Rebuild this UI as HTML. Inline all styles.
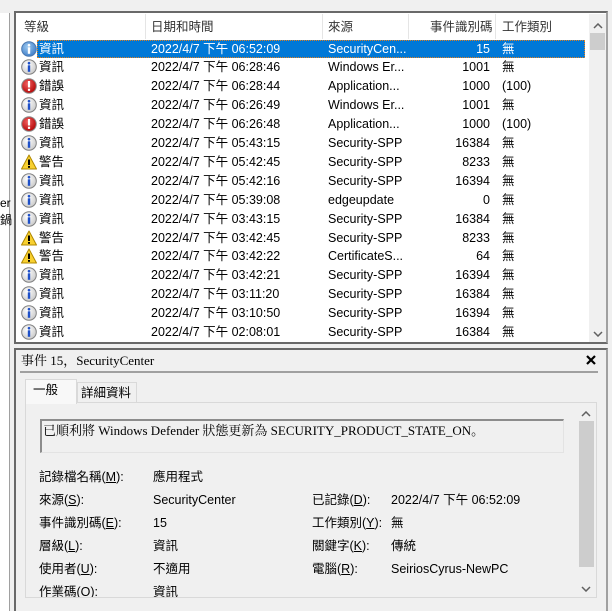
<!DOCTYPE html><html><head><meta charset="utf-8"><style>
*{margin:0;padding:0;box-sizing:border-box}
body{width:612px;height:611px;overflow:hidden;background:#f0f0f0;position:relative;font-family:"Liberation Sans","Noto Sans CJK TC",sans-serif;font-size:12.5px;line-height:16px;color:#000}
.a{position:absolute;white-space:nowrap;line-height:16px}
.row{position:absolute;left:17px;width:572px;height:19px}
.row span{position:absolute;top:1px;line-height:16px}
.ic{position:absolute;left:4px;top:1px;width:16px;height:16px}
.lbl{position:absolute;white-space:nowrap;color:#000;line-height:16px}
.mono{font-family:"Liberation Serif","Noto Serif CJK SC",serif}
.chev{position:absolute;width:10px;height:6px}
</style></head><body>
<div class="a" style="left:0;top:13px;width:10px;height:598px;background:#fff;border-right:1px solid #a0a0a0"></div>
<div class="a" style="left:0;top:195px;font-size:12px">er</div>
<div class="a" style="left:0;top:212px;font-size:12px">鍋</div>
<div class="a" style="left:14px;top:11px;width:594px;height:333px;border:2px solid #696969;border-right-color:#a0a0a0;background:#fff"></div>
<div class="a" style="left:24px;top:19px;color:#333">等級</div>
<div class="a" style="left:145px;top:14px;width:1px;height:25px;background:#e5e5e5"></div>
<div class="a" style="left:151px;top:19px;color:#333">日期和時間</div>
<div class="a" style="left:322px;top:14px;width:1px;height:25px;background:#e5e5e5"></div>
<div class="a" style="left:328px;top:19px;color:#333">來源</div>
<div class="a" style="left:408px;top:14px;width:1px;height:25px;background:#e5e5e5"></div>
<div class="a" style="left:430px;top:19px;color:#333">事件識別碼</div>
<div class="a" style="left:495px;top:14px;width:1px;height:25px;background:#e5e5e5"></div>
<div class="a" style="left:502px;top:19px;color:#333">工作類別</div>
<div class="a" style="left:589px;top:14px;width:17px;height:328px;background:#f0f0f0"></div>
<svg class="chev" style="left:593px;top:23px" viewBox="0 0 10 6"><polyline points="1,5 5,1 9,5" fill="none" stroke="#606060" stroke-width="1.5"/></svg>
<div class="a" style="left:590px;top:33px;width:15px;height:17px;background:#cdcdcd"></div>
<svg class="chev" style="left:593px;top:331px" viewBox="0 0 10 6"><polyline points="1,1 5,5 9,1" fill="none" stroke="#606060" stroke-width="1.5"/></svg>
<svg width="0" height="0" style="position:absolute"><defs>
<radialGradient id="gi" cx="40%" cy="35%" r="70%"><stop offset="0" stop-color="#fff"/><stop offset="1" stop-color="#c8c8c8"/></radialGradient>
<radialGradient id="gr" cx="40%" cy="35%" r="70%"><stop offset="0" stop-color="#f06060"/><stop offset="1" stop-color="#b00000"/></radialGradient>
<radialGradient id="gb" cx="40%" cy="35%" r="70%"><stop offset="0" stop-color="#9cc8f0"/><stop offset="1" stop-color="#3b7cc8"/></radialGradient>
<symbol id="info" viewBox="0 0 16 16"><circle cx="8" cy="8" r="7.3" fill="url(#gi)" stroke="#808080"/><circle cx="8" cy="4.2" r="1.3" fill="#1e50c8"/><rect x="6.8" y="6.3" width="2.4" height="6.5" fill="#1e50c8"/></symbol>
<symbol id="infos" viewBox="0 0 16 16"><circle cx="8" cy="8" r="7.3" fill="url(#gb)" stroke="#4a78b0"/><circle cx="8" cy="4.2" r="1.3" fill="#fff"/><rect x="6.8" y="6.3" width="2.4" height="6.5" fill="#fff"/></symbol>
<symbol id="err" viewBox="0 0 16 16"><circle cx="8" cy="8" r="7.3" fill="url(#gr)" stroke="#8a8a8a"/><rect x="6.9" y="3" width="2.2" height="6.5" fill="#fff"/><rect x="6.9" y="10.7" width="2.2" height="2.2" fill="#fff"/></symbol>
<symbol id="warn" viewBox="0 0 16 16"><path d="M8 1 L15.5 15 H0.5 Z" fill="#f8d030" stroke="#b08800" stroke-linejoin="round"/><rect x="7" y="5.5" width="2" height="5.5" fill="#000"/><rect x="7" y="12" width="2" height="1.8" fill="#000"/></symbol>
</defs></svg>
<div id="rows"></div>
<script>
var d=[["infos","資訊","06:52:09","SecurityCen...","15","無"],["info","資訊","06:28:46","Windows Er...","1001","無"],["err","錯誤","06:28:44","Application...","1000","(100)"],["info","資訊","06:26:49","Windows Er...","1001","無"],["err","錯誤","06:26:48","Application...","1000","(100)"],["info","資訊","05:43:15","Security-SPP","16384","無"],["warn","警告","05:42:45","Security-SPP","8233","無"],["info","資訊","05:42:16","Security-SPP","16394","無"],["info","資訊","05:39:08","edgeupdate","0","無"],["info","資訊","03:43:15","Security-SPP","16384","無"],["warn","警告","03:42:45","Security-SPP","8233","無"],["warn","警告","03:42:22","CertificateS...","64","無"],["info","資訊","03:42:21","Security-SPP","16394","無"],["info","資訊","03:11:20","Security-SPP","16384","無"],["info","資訊","03:10:50","Security-SPP","16394","無"],["info","資訊","02:08:01","Security-SPP","16384","無"]];
var h="";d.forEach(function(r,i){var t=39.5+i*18.9;var s=i==0;var c=s?'color:#fff':'';
h+='<div class="row" style="top:'+t+'px;height:'+(i==15?'18':'19')+'px;overflow:hidden">'+(s?'<div style="position:absolute;left:20px;top:0;width:548px;height:18px;background:#0078d7;outline:1px dotted #e08020;outline-offset:-1px"></div>':'')+'<svg class="ic"><use href="#'+r[0]+'"/></svg><span style="left:22px;'+c+'">'+r[1]+'</span><span style="left:134px;'+c+'">2022/4/7 下午 '+r[2]+'</span><span style="left:311px;'+c+'">'+r[3]+'</span><span style="right:99px;'+c+'">'+r[4]+'</span><span style="left:485px;'+c+'">'+r[5]+'</span></div>';});
document.getElementById("rows").innerHTML=h;
</script>
<div class="a" style="left:14px;top:348px;width:594px;height:263px;border:2px solid #696969;border-right-color:#a0a0a0;border-bottom:none;background:#f0f0f0"></div>
<div class="a mono" style="left:21px;top:353px;font-size:13px">事件 15，SecurityCenter</div>
<svg class="a" style="left:586px;top:355px" width="10" height="10" viewBox="0 0 10 10"><path d="M1 1L9 9M9 1L1 9" stroke="#000" stroke-width="2.2"/></svg>
<div class="a" style="left:20px;top:371px;width:578px;height:2px;background:#a0a0a0"></div>
<div class="a" style="left:77px;top:382px;width:60px;height:20px;background:#f0f0f0;border:1px solid #d9d9d9;border-bottom:none"></div>
<div class="a" style="left:81px;top:385px">詳細資料</div>
<div class="a" style="left:25px;top:402px;width:572px;height:196px;background:#f0f0f0;border:1px solid #d9d9d9"></div>
<div class="a" style="left:25px;top:379px;width:52px;height:25px;background:#f8f8f8;border:1px solid #d9d9d9;border-bottom:none"></div>
<div class="a" style="left:33px;top:382px">一般</div>
<div class="a" style="left:40px;top:419px;width:524px;height:34px;border:1px solid #e3e3e3;border-top:2px solid #8c8c8c;border-left:2px solid #8c8c8c;background:#f0f0f0"></div>
<div class="a mono" style="left:43px;top:423px;font-size:13px">已順利將 Windows Defender 狀態更新為 SECURITY_PRODUCT_STATE_ON。</div>
<div class="a" style="left:578px;top:403px;width:17px;height:194px;background:#f0f0f0"></div>
<svg class="chev" style="left:581px;top:411px" viewBox="0 0 10 6"><polyline points="1,5 5,1 9,5" fill="none" stroke="#606060" stroke-width="1.5"/></svg>
<div class="a" style="left:579px;top:421px;width:15px;height:146px;background:#cdcdcd"></div>
<svg class="chev" style="left:581px;top:586px" viewBox="0 0 10 6"><polyline points="1,1 5,5 9,1" fill="none" stroke="#606060" stroke-width="1.5"/></svg>
<div class="lbl" style="left:39px;top:469px">記錄檔名稱(<u>M</u>):</div><div class="lbl" style="left:153px;top:469px">應用程式</div>
<div class="lbl" style="left:39px;top:492px">來源(<u>S</u>):</div><div class="lbl" style="left:153px;top:492px">SecurityCenter</div>
<div class="lbl" style="left:39px;top:515px">事件識別碼(<u>E</u>):</div><div class="lbl" style="left:153px;top:515px">15</div>
<div class="lbl" style="left:39px;top:538px">層級(<u>L</u>):</div><div class="lbl" style="left:153px;top:538px">資訊</div>
<div class="lbl" style="left:39px;top:561px">使用者(<u>U</u>):</div><div class="lbl" style="left:153px;top:561px">不適用</div>
<div class="lbl" style="left:39px;top:584px;height:13px;overflow:hidden">作業碼(O):</div><div class="lbl" style="left:153px;top:584px;height:13px;overflow:hidden">資訊</div>
<div class="lbl" style="left:312px;top:492px">已記錄(<u>D</u>):</div><div class="lbl" style="left:391px;top:492px">2022/4/7 下午 06:52:09</div>
<div class="lbl" style="left:312px;top:515px">工作類別(<u>Y</u>):</div><div class="lbl" style="left:391px;top:515px">無</div>
<div class="lbl" style="left:312px;top:538px">關鍵字(<u>K</u>):</div><div class="lbl" style="left:391px;top:538px">傳統</div>
<div class="lbl" style="left:312px;top:561px">電腦(<u>R</u>):</div><div class="lbl" style="left:391px;top:561px">SeiriosCyrus-NewPC</div>
</body></html>
